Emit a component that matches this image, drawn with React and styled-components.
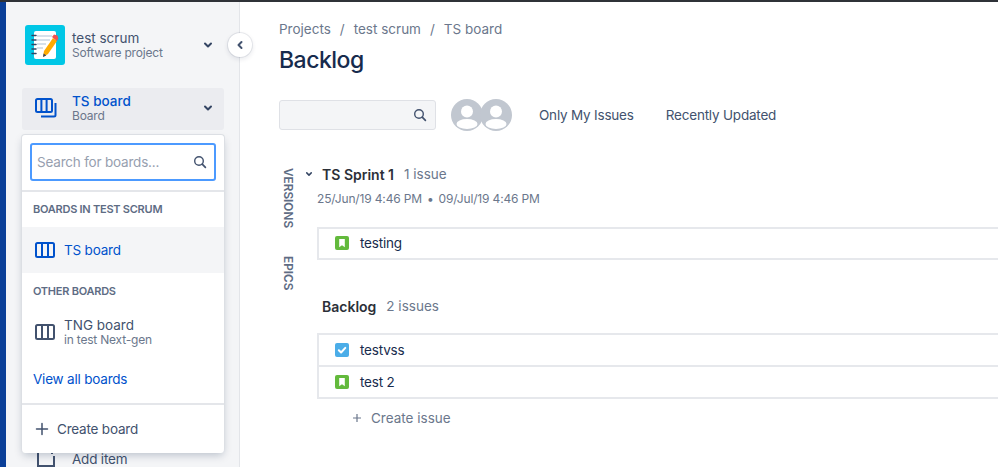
import React from "react";
import styled, { createGlobalStyle } from "styled-components";

const GlobalStyle = createGlobalStyle`
html, body {
  margin: 0;
  padding: 0;
  width: 998px;
  height: 467px;
  overflow: hidden;
  background: #fff;
  font-family: Inter, "Liberation Sans", sans-serif;
  font-size: 13.5px;
  letter-spacing: -0.2px;
  color: #172b4d;
  -webkit-font-smoothing: antialiased;
}
* { box-sizing: border-box; }
`;

const Page = styled.div`
display: flex;
flex-direction: column;
width: 998px;
height: 467px;
overflow: hidden;
border-top: 2px solid #2f3238;
`;
const Body = styled.div`
display: flex;
flex: 1;
min-height: 0;
`;
const BlueStrip = styled.div`
width: 6px;
background: #0a3f98;
`;
const Sidebar = styled.aside`
position: relative;
width: 234px;
flex-shrink: 0;
background: #f4f5f7;
border-right: 1px solid #e3e5e9;
padding: 23px 15px 0 16px;
`;
const CollapseButton = styled.div`
position: absolute;
top: 31px;
right: -13px;
width: 24px;
height: 24px;
border-radius: 50%;
background: #fff;
box-shadow: 0 0 0 1px rgba(9, 30, 66, 0.08), 0 2px 4px 1px rgba(9, 30, 66, 0.08);
display: flex;
align-items: center;
justify-content: center;
color: #42526e;
z-index: 3;
`;
const ProjectRow = styled.div`
display: flex;
align-items: center;
height: 40px;
padding-left: 3px;
padding-right: 8px;
`;
const Logo = styled.svg`
width: 40px;
height: 40px;
flex-shrink: 0;
`;
const TwoLines = styled.div`
flex: 1;
display: flex;
flex-direction: column;
margin-left: ${(p) => p.$gap || 7}px;
`;
const LineMain = styled.div`
font-size: 13.5px;
line-height: 16px;
letter-spacing: 0;
font-weight: ${(p) => (p.$active ? 500 : 400)};
color: ${(p) => (p.$active ? "#0052cc" : "#42526e")};
`;
const LineSub = styled.div`
font-size: 12px;
line-height: 14px;
color: #6b778c;
`;
const Switcher = styled.div`
position: relative;
margin-top: 23px;
`;
const BoardRow = styled.div`
display: flex;
align-items: center;
height: 42px;
padding: 0 8px 3px 13px;
border-radius: 3px;
background: #ebecf0;
`;
const Dropdown = styled.div`
position: absolute;
top: 46px;
left: -1px;
width: 204px;
height: 319px;
background: #fff;
border-radius: 4px;
border: 1px solid #dcdfe4;
border-bottom: none;
box-shadow: 0 4px 8px -2px rgba(9, 30, 66, 0.25);
display: flex;
flex-direction: column;
z-index: 2;
`;
const SearchArea = styled.div`
height: 57px;
padding: 8px 8px 0;
border-bottom: 2px solid #e4e6ea;
flex-shrink: 0;
`;
const SearchBox = styled.div`
height: 38px;
display: flex;
align-items: center;
justify-content: space-between;
padding: 0 7px 0 5px;
border: 2px solid #4c9aff;
border-radius: 3px;
background: #fff;
color: #97a0af;
`;
const GroupLabel = styled.div`
font-size: 11px;
line-height: 14px;
font-weight: 600;
letter-spacing: -0.25px;
color: #5e6c84;
padding-left: 11px;
margin-top: ${(p) => p.$top}px;
margin-bottom: ${(p) => p.$bottom}px;
`;
const MenuItem = styled.div`
display: flex;
align-items: center;
height: ${(p) => p.$height}px;
padding-left: 13px;
background: ${(p) => (p.$selected ? "#f4f5f7" : "#fff")};
color: ${(p) => (p.$selected ? "#0052cc" : "#42526e")};
`;
const MenuLink = styled.div`
padding-left: 11px;
margin-top: ${(p) => p.$top}px;
line-height: 18px;
color: #0052cc;
`;
const MenuFooter = styled.div`
margin-top: 15px;
flex: 1;
display: flex;
align-items: center;
gap: 8px;
padding: 0 0 1px 13px;
border-top: 2px solid #e4e6ea;
color: #42526e;
`;
const NavRow = styled.div`
display: flex;
align-items: center;
gap: 16px;
margin-top: 318px;
padding-left: 14px;
height: 22px;
color: #42526e;
`;
const NavIcon = styled.svg`
width: 20px;
height: 20px;
margin-top: -4px;
flex-shrink: 0;
`;
const Main = styled.main`
flex: 1;
min-width: 0;
padding: 18px 0 0 39px;
overflow: hidden;
`;
const Breadcrumbs = styled.nav`
display: flex;
align-items: center;
height: 18px;
color: #6b778c;
letter-spacing: 0;
`;
const Slash = styled.span`
margin: 0 9px;
`;
const Title = styled.h1`
margin: 8px 0 0;
font-size: 23px;
line-height: 28px;
font-weight: 500;
letter-spacing: -0.5px;
color: #172b4d;
`;
const Toolbar = styled.div`
display: flex;
align-items: center;
margin-top: 25px;
height: 32px;
`;
const FilterInput = styled.div`
width: 157px;
height: 30px;
background: #f4f5f7;
border: 1px solid #dfe1e6;
border-radius: 3px;
display: flex;
align-items: center;
justify-content: flex-end;
padding-right: 8px;
color: #42526e;
`;
const Avatars = styled.div`
display: flex;
margin-left: 15px;
margin-right: 27px;
`;
const Avatar = styled.svg`
width: 32px;
height: 32px;
margin-left: ${(p) => (p.$overlap ? "-3px" : 0)};
`;
const QuickFilter = styled.span`
margin-right: 32px;
color: #42526e;
`;
const Content = styled.div`
display: flex;
margin-top: 24px;
`;
const SideTabs = styled.div`
width: 38px;
flex-shrink: 0;
display: flex;
flex-direction: column;
align-items: flex-start;
gap: 28px;
padding: 13px 0 0 4px;
`;
const SideTab = styled.div`
writing-mode: vertical-rl;
font-size: 11.8px;
line-height: 10px;
font-weight: 600;
letter-spacing: 0;
color: #5e6c84;
`;
const Issues = styled.div`
flex: 1;
min-width: 0;
`;
const SprintHead = styled.div`
display: flex;
align-items: center;
height: 18px;
margin-top: ${(p) => p.$top}px;
padding-left: 5px;
`;
const HeadToggle = styled.span`
display: flex;
margin-left: -19px;
margin-right: 7px;
`;
const HeadTitle = styled.span`
font-weight: 600;
font-size: 14px;
letter-spacing: 0;
color: #2c3038;
margin-right: 10px;
`;
const HeadCount = styled.span`
color: #6b778c;
letter-spacing: 0;
`;
const Chevron = styled.svg`
flex-shrink: 0;
`;
const Dates = styled.div`
margin: 8px 0 0 0;
font-size: 12px;
line-height: 16px;
letter-spacing: -0.15px;
color: #6b778c;
`;
const Dot = styled.span`
margin: 0 5px;
`;
const IssueList = styled.div`
width: 720px;
margin-top: ${(p) => p.$top}px;
border: 2px solid #e6e8ec;
border-right: none;
`;
const IssueRow = styled.div`
display: flex;
align-items: center;
gap: 11px;
height: ${(p) => p.$height}px;
padding: 0 0 1px 16px;
color: #172b4d;
border-top: ${(p) => (p.$divided ? "2px solid #e6e8ec" : "none")};
`;
const TypeIcon = styled.svg`
width: 14px;
height: 14px;
flex-shrink: 0;
`;
const CreateIssue = styled.div`
display: flex;
align-items: center;
gap: 9px;
margin: 10px 0 0 35px;
color: #6b778c;
letter-spacing: 0;
line-height: 18px;
`;

const ChevronDown = ({ size = 16, color = "#344563" }) => (
  <Chevron width={size} height={size} viewBox="0 0 16 16" fill="none" stroke={color} strokeWidth="2" strokeLinecap="round" strokeLinejoin="round">
    <path d="M5 6.5l3 3 3-3" />
  </Chevron>
);

const Magnifier = ({ color = "#42526e" }) => (
  <svg width="14" height="14" viewBox="0 0 14 14" fill="none" stroke={color} strokeWidth="1.4" strokeLinecap="round">
    <circle cx="6" cy="6" r="4.3" />
    <path d="M9.2 9.2l3.2 3.2" strokeWidth="1.7" />
  </svg>
);

const ColumnsIcon = ({ color }) => (
  <svg width="20" height="16" viewBox="0 0 20 16" fill="none" stroke={color} strokeWidth="2">
    <rect x="1" y="1" width="18" height="14" rx="1.5" />
    <path d="M7 1v14M13 1v14" />
  </svg>
);

const StackedBoardIcon = () => (
  <svg width="22" height="20" viewBox="0 0 22 20" fill="none" stroke="#0052cc" strokeWidth="2" strokeLinejoin="round">
    <rect x="1" y="1" width="16" height="13" rx="1.5" />
    <path d="M6.4 1v13M11.6 1v13" />
    <path d="M20.5 5v12a1.5 1.5 0 0 1-1.5 1.5H6" />
  </svg>
);

const PersonAvatar = ({ overlap }) => (
  <Avatar $overlap={overlap} viewBox="0 0 32 32">
    <circle cx="16" cy="16" r="16" fill="#c1c7d0" />
    <circle cx="16" cy="12.5" r="6" fill="#fff" />
    <ellipse cx="16" cy="25" rx="10.5" ry="5" fill="#fff" />
  </Avatar>
);

const StoryIcon = () => (
  <TypeIcon viewBox="0 0 14 14">
    <rect width="14" height="14" rx="2" fill="#63ba3c" />
    <path d="M4.2 3h5.6v8.2L7 9.2l-2.8 2z" fill="#fff" />
  </TypeIcon>
);

const TaskIcon = () => (
  <TypeIcon viewBox="0 0 14 14">
    <rect width="14" height="14" rx="2" fill="#4bade8" />
    <path d="M3.8 7.2l2.3 2.3 4.2-4.6" fill="none" stroke="#fff" strokeWidth="2" strokeLinecap="round" strokeLinejoin="round" />
  </TypeIcon>
);

const ProjectLogo = () => (
  <Logo viewBox="0 0 40 40">
    <rect width="40" height="40" rx="3" fill="#00c7e6" />
    <rect x="9" y="6" width="22" height="28" rx="2" fill="#fff" />
    <path d="M12 11h15M12 15h13M12 19h9M12 23h6" stroke="#c9d6e4" strokeWidth="1.4" />
    <path d="M7 10.5h4M7 15h4M7 19.5h4M7 24h4M7 28.5h4" stroke="#344563" strokeWidth="1.5" strokeLinecap="round" />
    <path d="M28 13l4 3-9 13-5 3 1-6z" fill="#ffab00" />
    <path d="M27 12l2-2.500 3.500 1 .8 3.300-1.500 2.200z" fill="#ef5350" />
    <path d="M18 32l.6-3.500 2.700 2z" fill="#344563" />
  </Logo>
);

const App = () => (
  <>
    <GlobalStyle />
    <Page>
      <Body>
        <BlueStrip />
        <Sidebar>
          <CollapseButton>
            <svg width="12" height="12" viewBox="0 0 12 12" fill="none" stroke="currentColor" strokeWidth="2" strokeLinecap="round" strokeLinejoin="round">
              <path d="M7.500 3L4.500 6l3 3" />
            </svg>
          </CollapseButton>
          <ProjectRow>
            <ProjectLogo />
            <TwoLines>
              <LineMain>test scrum</LineMain>
              <LineSub>Software project</LineSub>
            </TwoLines>
            <ChevronDown />
          </ProjectRow>
          <Switcher>
            <BoardRow>
              <StackedBoardIcon />
              <TwoLines $gap={15}>
                <LineMain $active>TS board</LineMain>
                <LineSub>Board</LineSub>
              </TwoLines>
              <ChevronDown />
            </BoardRow>
            <Dropdown>
              <SearchArea>
                <SearchBox>
                  Search for boards...
                  <Magnifier />
                </SearchBox>
              </SearchArea>
              <GroupLabel $top={10} $bottom={11}>BOARDS IN TEST SCRUM</GroupLabel>
              <MenuItem $selected $height={46}>
                <ColumnsIcon color="#0052cc" />
                <TwoLines $gap={9}>
                  <span>TS board</span>
                </TwoLines>
              </MenuItem>
              <GroupLabel $top={11} $bottom={11}>OTHER BOARDS</GroupLabel>
              <MenuItem $height={46}>
                <ColumnsIcon color="#42526e" />
                <TwoLines $gap={9}>
                  <LineMain>TNG board</LineMain>
                  <LineSub>in test Next-gen</LineSub>
                </TwoLines>
              </MenuItem>
              <MenuLink $top={15}>View all boards</MenuLink>
              <MenuFooter>
                <svg width="14" height="14" viewBox="0 0 14 14" fill="none" stroke="#42526e" strokeWidth="1.500" strokeLinecap="round">
                  <path d="M7 1.500v11M1.500 7h11" />
                </svg>
                Create board
              </MenuFooter>
            </Dropdown>
          </Switcher>
          <NavRow>
            <NavIcon viewBox="0 0 20 20" fill="none" stroke="#42526e" strokeWidth="2">
              <path d="M11 3H2v16h16V9M16 1v6M13 4h6" />
            </NavIcon>
            Add item
          </NavRow>
        </Sidebar>
        <Main>
          <Breadcrumbs>
            <span>Projects</span>
            <Slash>/</Slash>
            <span>test scrum</span>
            <Slash>/</Slash>
            <span>TS board</span>
          </Breadcrumbs>
          <Title>Backlog</Title>
          <Toolbar>
            <FilterInput>
              <Magnifier />
            </FilterInput>
            <Avatars>
              <PersonAvatar />
              <PersonAvatar overlap />
            </Avatars>
            <QuickFilter>Only My Issues</QuickFilter>
            <QuickFilter>Recently Updated</QuickFilter>
          </Toolbar>
          <Content>
            <SideTabs>
              <SideTab>VERSIONS</SideTab>
              <SideTab>EPICS</SideTab>
            </SideTabs>
            <Issues>
              <SprintHead $top={10}>
                <HeadToggle>
                  <ChevronDown size={12} />
                </HeadToggle>
                <HeadTitle>TS Sprint 1</HeadTitle>
                <HeadCount>1 issue</HeadCount>
              </SprintHead>
              <Dates>
                25/Jun/19 4:46 PM<Dot>•</Dot>09/Jul/19 4:46 PM
              </Dates>
              <IssueList $top={20}>
                <IssueRow $height={29}>
                  <StoryIcon />
                  testing
                </IssueRow>
              </IssueList>
              <SprintHead $top={37}>
                <HeadTitle>Backlog</HeadTitle>
                <HeadCount>2 issues</HeadCount>
              </SprintHead>
              <IssueList $top={18}>
                <IssueRow $height={30}>
                  <TaskIcon />
                  testvss
                </IssueRow>
                <IssueRow $height={32} $divided>
                  <StoryIcon />
                  test 2
                </IssueRow>
              </IssueList>
              <CreateIssue>
                <svg width="10" height="10" viewBox="0 0 10 10" fill="none" stroke="#6b778c" strokeWidth="1.200">
                  <path d="M5 1v8M1 5h8" />
                </svg>
                Create issue
              </CreateIssue>
            </Issues>
          </Content>
        </Main>
      </Body>
    </Page>
  </>
);

export default App;
